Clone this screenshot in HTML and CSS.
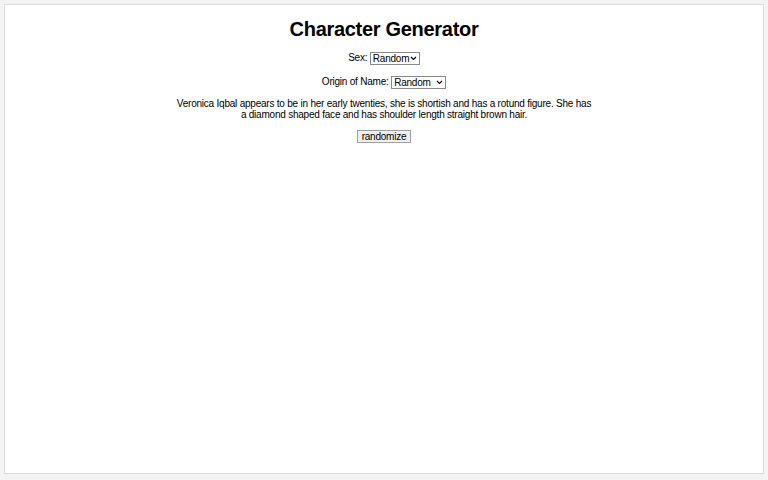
FILE: index.html
```html
<!DOCTYPE html>
<html>
<head>
<meta charset="utf-8">
<title>Character Generator</title>
<link rel="stylesheet" href="styles.css">
</head>
<body>
<div class="page">
  <h1 class="title">Character Generator</h1>
  <div class="row row-sex">
    <label>Sex: <span class="selwrap"><select class="sel sel-sex"><option>Random</option><option>Male</option><option>Female</option></select><svg class="chev" width="7" height="5" viewBox="0 0 7 5"><path d="M1 1 L3.5 3.5 L6 1" fill="none" stroke="#000" stroke-width="1.2"/></svg></span></label>
  </div>
  <div class="row row-origin">
    <label>Origin of Name: <span class="selwrap"><select class="sel sel-origin"><option>Random</option><option>English</option><option>Arabic</option></select><svg class="chev" width="7" height="5" viewBox="0 0 7 5"><path d="M1 1 L3.5 3.5 L6 1" fill="none" stroke="#000" stroke-width="1.2"/></svg></span></label>
  </div>
  <p class="desc">Veronica Iqbal appears to be in her early twenties, she is shortish and has a rotund figure. She has a diamond shaped face and has shoulder length straight brown hair.</p>
  <div class="row">
    <button class="btn">randomize</button>
  </div>
</div>
</body>
</html>
```
FILE: styles.css
```css
html, body {
  margin: 0;
  padding: 0;
  height: 100%;
}
body {
  background: #f3f3f3;
  font-family: "Liberation Sans", Arial, sans-serif;
  font-size: 10px;
  letter-spacing: -0.22px;
  color: #000;
  padding: 4px;
  box-sizing: border-box;
}
.page {
  background: #fff;
  border: 1px solid #dcdcdc;
  height: 470px;
  box-sizing: border-box;
  text-align: center;
  padding-top: 12px;
}
.title {
  font-size: 20px;
  font-weight: bold;
  letter-spacing: -0.3px;
  margin: 0 0 10px;
  line-height: 24px;
}
.row {
  line-height: 14px;
  height: 14px;
}
.row-sex {
  margin-bottom: 10px;
}
.row-origin {
  margin-bottom: 9px;
}
.selwrap {
  position: relative;
  display: inline-block;
  vertical-align: middle;
  height: 13px;
}
.sel {
  -webkit-appearance: none;
  appearance: none;
  display: block;
  font-family: "Liberation Sans", Arial, sans-serif;
  font-size: 10px;
  letter-spacing: -0.22px;
  color: #000;
  height: 13px;
  line-height: 11px;
  padding: 0 0 0 2px;
  border: 1px solid #8a8a8a;
  background: #fff;
  border-radius: 0;
  box-sizing: border-box;
}
.sel-sex {
  width: 50px;
}
.sel-origin {
  width: 55px;
}
.chev {
  position: absolute;
  right: 3px;
  top: 4px;
  pointer-events: none;
}
.desc {
  width: 420px;
  margin: 0 auto 9px;
  line-height: 11px;
}
.btn {
  font-family: "Liberation Sans", Arial, sans-serif;
  font-size: 10px;
  letter-spacing: -0.22px;
  color: #000;
  height: 13px;
  padding: 0 4px;
  border: 1px solid #a0a0a0;
  background: #efefef;
  border-radius: 0;
  line-height: 11px;
  vertical-align: middle;
}
```
